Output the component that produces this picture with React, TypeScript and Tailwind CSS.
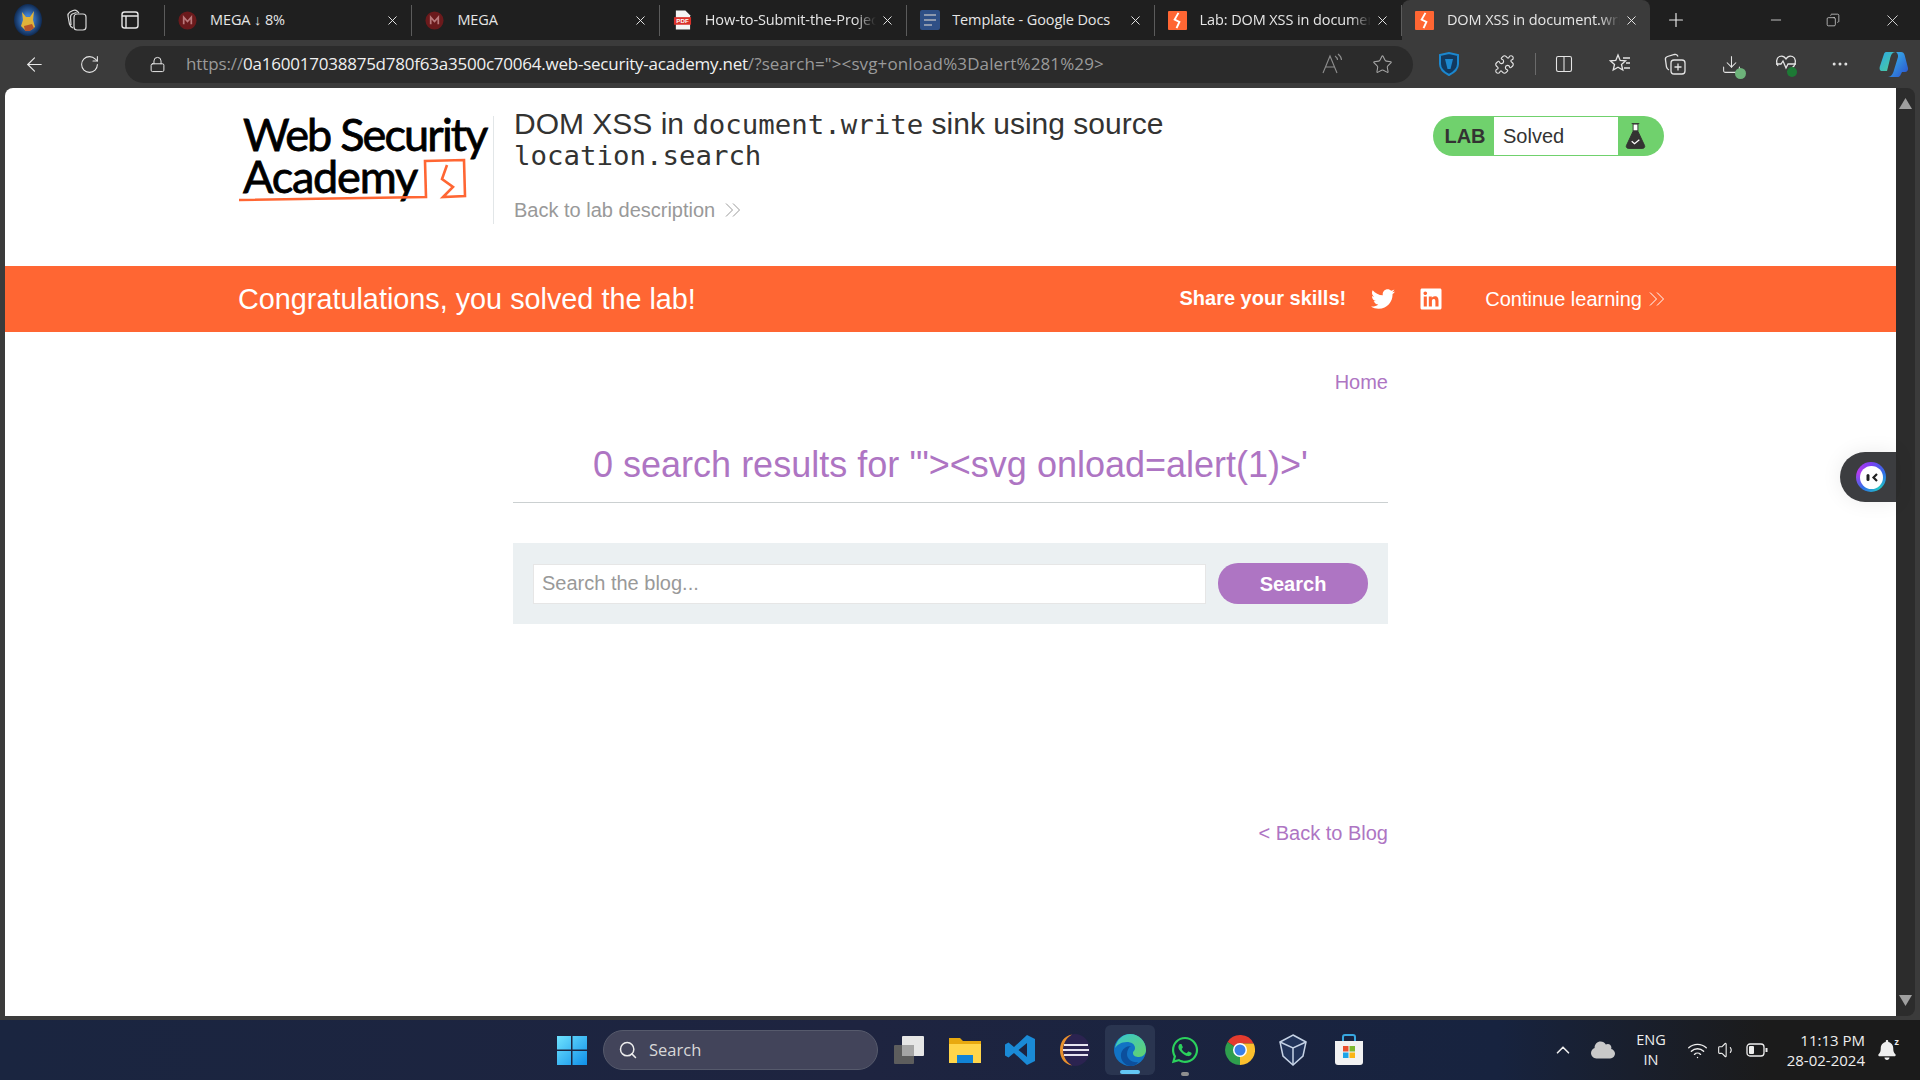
import React from "react";
import { ArrowLeft, RotateCw, Lock, Star, Puzzle, Columns2, Download, Ellipsis, X, Plus, Minus, Search, ChevronUp, Wifi, Volume1, Copy } from "lucide-react";
import { FaTwitter, FaLinkedin, FaWhatsapp, FaCloud, FaBell } from "react-icons/fa";

const tabFont = { fontFamily: '"Open Sans", sans-serif' };

function Bolt({ size = 19 }: { size?: number }) {
  return (
    <svg width={size} height={size} viewBox="0 0 20 20" className="shrink-0">
      <rect width="20" height="20" rx="1" fill="#ff6633" />
      <path d="M11 2 L7 9 L12 11.5 L9 18" fill="none" stroke="#fff" strokeWidth="2" />
    </svg>
  );
}
function Mega() {
  return (
    <svg width="19" height="19" viewBox="0 0 20 20" className="shrink-0">
      <circle cx="10" cy="10" r="9.5" fill="#6b1a1c" />
      <path d="M6 14V6.5l4 4.5 4-4.5V14" fill="none" stroke="#b9787a" strokeWidth="1.8" />
    </svg>
  );
}
function Pdf() {
  return (
    <svg width="19" height="20" viewBox="0 0 20 20" className="shrink-0">
      <path d="M3 0h10l5 5v15H3z" fill="#f4f4f4" />
      <rect x="1" y="7" width="18" height="8" fill="#d9322b" />
      <text x="10" y="13.4" textAnchor="middle" fontSize="6.5" fontWeight="700" fill="#fff" fontFamily="Liberation Sans">PDF</text>
    </svg>
  );
}
function Docs() {
  return (
    <svg width="20" height="20" viewBox="0 0 20 20" className="shrink-0">
      <rect width="20" height="20" rx="2" fill="#2f4f86" />
      <path d="M4 5h12M4 10h12M4 15h8" stroke="#8c97ad" strokeWidth="2.2" />
    </svg>
  );
}

function Tab({ icon, title, active, fade }: { icon: React.ReactNode; title: string; active?: boolean; fade?: boolean }) {
  return (
    <div
      className={
        active
          ? "flex h-10 w-[248px] shrink-0 items-center rounded-t-lg bg-[#3b3b3b] pl-[13px] pr-[11px]"
          : "flex h-[31px] w-[247.4px] shrink-0 items-center border-r border-[#5b5b5b] pl-[13px] pr-[11px]"
      }
    >
      <span className="flex w-[32px] shrink-0 items-center">{icon}</span>
      <span
        className={
          fade
            ? "min-w-0 flex-1 overflow-hidden whitespace-nowrap text-[14.5px] tracking-[-0.1px] text-[#e6e6e6] [mask-image:linear-gradient(to_right,black_88%,transparent)]"
            : "min-w-0 flex-1 overflow-hidden whitespace-nowrap text-[14.5px] tracking-[-0.1px] text-[#e6e6e6]"
        }
      >
        {title}
      </span>
      <X size={15} strokeWidth={1.5} className="ml-1 shrink-0 text-[#eeeeee]" />
    </div>
  );
}

function TabStrip() {
  return (
    <div className="flex h-10 shrink-0 items-center bg-[#1f1f1f]" style={tabFont}>
      <svg width="30" height="32" viewBox="0 0 30 32" className="ml-[13px] shrink-0">
        <defs>
          <radialGradient id="av">
            <stop offset="0.3" stopColor="#3f7fd0" />
            <stop offset="1" stopColor="#0f2a52" />
          </radialGradient>
        </defs>
        <ellipse cx="15" cy="16" rx="14" ry="16" fill="url(#av)" />
        <path d="M9 8l4 5h4l4-6-1 9 2 7-4 3h-6l-4-4 2-6z" fill="#e0b33a" />
        <path d="M11 22l8-2 2 4-4 3h-5z" fill="#b5552a" />
      </svg>
      <svg width="24" height="24" viewBox="0 0 24 24" fill="none" stroke="#d8d8d8" strokeWidth="1.2" className="ml-[22px] shrink-0">
        <rect x="9" y="6" width="12" height="16" rx="3" />
        <path d="M8 20c-2-1-3-2-3.500-4L3 8c-.3-2 .5-3 2-4l3-1.500c1.500-.6 3-.5 4 .5l2 2M6 17L5.500 9c0-2 1-3 3-3.500l3-1" />
      </svg>
      <svg width="20" height="20" viewBox="0 0 20 20" fill="none" stroke="#e6e6e6" strokeWidth="1.4" className="ml-[31px] shrink-0">
        <rect x="2" y="2" width="16" height="16" rx="2.500" />
        <path d="M2 6h16M6 6v12" />
      </svg>
      <div className="ml-[24px] h-[31px] w-px shrink-0 bg-[#5b5b5b]" />
      <Tab icon={<Mega />} title="MEGA ↓ 8%" />
      <Tab icon={<Mega />} title="MEGA" />
      <Tab icon={<Pdf />} title="How-to-Submit-the-Project" fade />
      <Tab icon={<Docs />} title="Template - Google Docs" />
      <Tab icon={<Bolt />} title="Lab: DOM XSS in document.write" fade />
      <Tab icon={<Bolt />} title="DOM XSS in document.write sink" active fade />
      <Plus size={22} strokeWidth={1.3} className="ml-[15px] shrink-0 text-[#e8e8e8]" />
      <Minus size={16} strokeWidth={1.2} className="ml-[81px] shrink-0 text-[#e8e8e8]" />
      <Copy size={14} strokeWidth={1.2} className="ml-[42px] shrink-0 -scale-x-100 text-[#e8e8e8]" />
      <X size={19} strokeWidth={1.1} className="ml-[43px] shrink-0 text-[#e8e8e8]" />
    </div>
  );
}

function Toolbar() {
  return (
    <div className="flex h-12 shrink-0 items-center bg-[#3b3b3b]" style={tabFont}>
      <ArrowLeft size={23} strokeWidth={1.2} className="ml-[23px] shrink-0 text-[#e8e8e8]" />
      <RotateCw size={21} strokeWidth={1.2} className="ml-[33px] shrink-0 text-[#e8e8e8]" />
      <div className="ml-[25px] flex h-[37px] w-[1288px] shrink-0 items-center rounded-full bg-[#2b2b2b] pl-[24px] pr-[20px]">
        <Lock size={17} strokeWidth={1.4} className="shrink-0 text-[#e8e8e8]" />
        <div className="ml-[20px] min-w-0 flex-1 whitespace-nowrap text-[17px] tracking-[0.12px] text-[#9a9a9a]">
          <span className="tracking-[-0.12px]">https://</span><span className="tracking-[-0.23px] text-[#f0f0f0]">0a160017038875d780f63a3500c70064.web-security-academy.net</span>/?search="&gt;&lt;svg+onload%3Dalert%281%29&gt;
        </div>
        <svg width="22" height="22" viewBox="0 0 22 22" fill="none" stroke="#8e8e8e" strokeWidth="1.100" className="mr-[1px] shrink-0">
          <path d="M1 20 L8 3 L15 20M3.500 14h9" />
          <path d="M13 3c1.500 1 2.500 2.500 2.500 4M16 1c2 1.500 3.500 3.500 3.500 6" />
        </svg>
        <Star size={21} strokeWidth={1.2} className="ml-[27px] shrink-0 text-[#a5a5a5]" />
      </div>
      <svg width="20" height="24" viewBox="0 0 20 24" className="ml-[26px] shrink-0">
        <path d="M1 3 L10 1 L19 3 V12 C19 18 14 21 10 23 C6 21 1 18 1 12 Z" fill="#12395f" stroke="#1b87cf" strokeWidth="2" />
        <path d="M6 7h8l-2.500 10h-3z" fill="#1b87cf" />
      </svg>
      <Puzzle size={21} strokeWidth={1.3} className="ml-[35px] shrink-0 text-[#e4e4e4]" />
      <div className="ml-[20px] h-[22px] w-px shrink-0 bg-[#6a6a6a]" />
      <Columns2 size={20} strokeWidth={1.3} className="ml-[18px] shrink-0 text-[#e4e4e4]" />
      <svg width="22" height="22" viewBox="0 0 22 22" fill="none" stroke="#e4e4e4" strokeWidth="1.300" className="ml-[35px] shrink-0">
        <path d="M9 2l2.200 5.500 5.300.4-4 3.600 1.300 5.500L9 14.200 4.200 17l1.300-5.500-4-3.600 5.300-.4z" />
        <path d="M14 5h7M17 10h4M15 15h6" />
      </svg>
      <svg width="22" height="22" viewBox="0 0 22 22" fill="none" stroke="#e4e4e4" strokeWidth="1.300" className="ml-[33px] shrink-0">
        <path d="M5 17c-1.500-.5-2-1.500-2.500-3L1.500 7C1 5 2 4 3.500 3.500l7-2c2-.5 3 .5 3.500 2" />
        <rect x="7" y="7" width="14" height="14" rx="3" />
        <path d="M14 10.500v7M10.500 14h7" />
      </svg>
      <div className="relative ml-[35px] shrink-0">
        <Download size={21} strokeWidth={1.2} className="text-[#e4e4e4]" />
        <span className="absolute -bottom-1 -right-1 h-[11px] w-[11px] rounded-full bg-[#6db37a]" />
      </div>
      <div className="relative ml-[33px] shrink-0">
        <svg width="22" height="22" viewBox="0 0 22 22" fill="none" stroke="#e4e4e4" strokeWidth="1.300">
          <path d="M3 13C1 10 1 5 4.500 3.500 7 2.500 9.500 3.500 11 6c1.500-2.500 4-3.500 6.500-2.500C21 5 21 10 19 13l-6 6" />
          <path d="M1 11h5l2-3 3 7 2-4h8" />
        </svg>
        <span className="absolute -bottom-0.5 right-0 h-[10px] w-[10px] rounded-full bg-[#1d7a35]" />
      </div>
      <Ellipsis size={20} strokeWidth={1.6} className="ml-[33px] shrink-0 text-[#e4e4e4]" />
      <svg width="30" height="30" viewBox="0 0 30 30" className="ml-[29px] shrink-0">
        <defs>
          <linearGradient id="cp1" x1="0" y1="0" x2="1" y2="1">
            <stop offset="0" stopColor="#2aa8e8" />
            <stop offset="1" stopColor="#53d18f" />
          </linearGradient>
          <linearGradient id="cp2" x1="0" y1="0" x2="1" y2="1">
            <stop offset="0" stopColor="#39c2ea" />
            <stop offset="1" stopColor="#2a4ecf" />
          </linearGradient>
        </defs>
        <path d="M7 3h10c-4 0-5 3-6 7l-3 12H3c-2 0-3-2-2-5L5 5c.3-1 1-2 2-2z" fill="url(#cp1)" />
        <path d="M17 3h5c2 0 3 1 3.600 3L29 19c.5 2-1 4-3 4h-3l-2 4c-1 1-2 1-3 1H9c3 0 5-3 6-7l4-13c.3-2-.5-4-2-5z" fill="url(#cp2)" />
      </svg>
    </div>
  );
}

function Logo() {
  return (
    <div className="relative h-[108px] w-[255px] shrink-0 -mt-[3px] pl-[5px] text-black" style={{ fontFamily: 'Lato, sans-serif' }}>
      <div className="whitespace-nowrap text-[45px] font-normal leading-[42px] tracking-[-1.85px] [-webkit-text-stroke:0.8px_black]">Web Security</div>
      <div className="whitespace-nowrap text-[45px] font-normal leading-[42px] tracking-[-1.2px] [-webkit-text-stroke:0.8px_black]">Academy</div>
      <svg width="250" height="60" viewBox="0 0 250 60" className="absolute left-0 top-[41px]" fill="none" stroke="#ff6633">
        <path d="M1 46 L188 43 L187 7 L226 6 L227 42 L205 43 L215 33 L204 25 L209 11" strokeWidth="2.600" />
      </svg>
    </div>
  );
}

function Chevrons({ className }: { className: string }) {
  return (
    <svg width="16" height="16" viewBox="0 0 16 16" fill="none" stroke="currentColor" strokeWidth="1" className={className}>
      <path d="M1 1.500 L7.500 8 L1 14.500M8 1.500 L14.500 8 L8 14.500" />
    </svg>
  );
}

function Header() {
  return (
    <div className="flex h-[178px] shrink-0 bg-white pl-[233px] pt-[28px] pr-[232px]" style={{ fontFamily: '"Liberation Sans", sans-serif' }}>
      <Logo />
      <div className="h-[108px] w-px shrink-0 bg-[#e2e6e8]" />
      <div className="ml-[20px] w-[680px] shrink-0 text-[#333332]">
        <div className="-mt-[7px] text-[30px] leading-[30px]">
          DOM XSS in <span className="font-['DejaVu_Sans_Mono',monospace] text-[27.4px]">document.write</span> sink using source <span className="font-['DejaVu_Sans_Mono',monospace] text-[27.4px]">location.search</span>
        </div>
        <div className="mt-[25px] flex items-center text-[20px] leading-[28px] text-[#999999]">
          Back to lab description
          <Chevrons className="ml-[10px] text-[#999999]" />
        </div>
      </div>
      <div className="ml-auto">
        <LabPill />
      </div>
    </div>
  );
}

function LabPill() {
  return (
    <div className="flex h-10 w-[231px] overflow-hidden rounded-[20px] bg-[#70d16d] p-px">
      <div className="flex w-[60px] items-center justify-center pl-[2px] text-[20px] font-bold text-[#333332]">LAB</div>
      <div className="flex w-[124px] items-center bg-white pl-[9px] text-[20px] text-[#333332]">Solved</div>
      <div className="flex flex-1 items-center pl-[7px]">
        <svg width="21" height="28" viewBox="0 0 22 28">
          <path d="M7 1h8M8.500 1v8L1.500 24c-.6 1.500.4 3 2 3h15c1.600 0 2.600-1.500 2-3L13.500 9V1" fill="#333332" stroke="#333332" strokeWidth="1" />
          <rect x="9" y="2" width="4" height="6" fill="#fff" />
          <path d="M7 19.500l3 2.500 5-4" fill="none" stroke="#fff" strokeWidth="1.300" />
        </svg>
      </div>
    </div>
  );
}

function Banner() {
  return (
    <div className="flex h-[66px] shrink-0 items-center bg-[#ff6633] pl-[233px] pr-[232px] text-white" style={{ fontFamily: '"Liberation Sans", sans-serif' }}>
      <div className="mt-[1px] text-[28.8px]">Congratulations, you solved the lab!</div>
      <div className="ml-auto -mt-[3px] text-[20px] font-bold">Share your skills!</div>
      <FaTwitter size={24} className="ml-[25px]" />
      <FaLinkedin size={24} className="ml-[24px]" />
      <div className="ml-[42px] -mt-[1px] text-[20px]">Continue learning</div>
      <Chevrons className="ml-[7px] -mr-[1px]" />
    </div>
  );
}

function Main() {
  return (
    <div className="flex flex-1 flex-col bg-white px-[508px]" style={{ fontFamily: '"Liberation Sans", sans-serif' }}>
      <div className="mt-[36px] text-right text-[20px] leading-[28px] text-[#ae75c3]">Home</div>
      <div className="mt-[46px] border-b border-[#cbd0d1] pb-[14px] text-center text-[36px] leading-[46px] text-[#ae75c3]">
        0 search results for '"&gt;&lt;svg onload=alert(1)&gt;'
      </div>
      <div className="mt-[40px] flex h-[81px] items-center bg-[#ebf0f2] px-[20px]">
        <div className="flex h-10 flex-1 items-center border border-[#e6e6e6] bg-white pb-[1px] pl-[8px] text-[20px] text-[#999999]">Search the blog...</div>
        <div className="ml-[12px] flex h-[41px] w-[150px] items-center justify-center rounded-[20px] bg-[#ae75c3] text-[20px] font-bold text-white">Search</div>
      </div>
      <div className="mt-[195px] text-right text-[20px] leading-[28px] text-[#ae75c3]">&lt; Back to Blog</div>
    </div>
  );
}

function Windows() {
  return (
    <svg width="30" height="30" viewBox="0 0 30 30" className="shrink-0">
      <defs>
        <linearGradient id="w" x1="0" y1="0" x2="1" y2="1">
          <stop offset="0" stopColor="#6fe3ff" />
          <stop offset="1" stopColor="#0f8fe8" />
        </linearGradient>
      </defs>
      <path d="M0 1h14v13.500H0zM15.500 1H30v13.500H15.500zM0 16h14v14H0zM15.500 16H30v14H15.500z" fill="url(#w)" />
    </svg>
  );
}

function TaskIcons() {
  return (
    <div className="flex items-center">
      <svg width="30" height="30" viewBox="0 0 30 30" className="ml-[16px]">
        <rect x="0" y="10" width="20" height="19" rx="1" fill="#5d5d5d" />
        <rect x="8" y="1" width="22" height="20" rx="1" fill="#e6e6e6" />
        <rect x="8" y="10" width="12" height="11" fill="#a5a5a5" />
      </svg>
      <svg width="32" height="28" viewBox="0 0 32 28" className="ml-[25px]">
        <path d="M0 2h11l3 3h18v22H0z" fill="#e8a90f" />
        <path d="M0 8h32v19H0z" fill="#ffd54a" />
        <rect x="8" y="19" width="16" height="8" fill="#1183d6" />
      </svg>
      <svg width="30" height="30" viewBox="0 0 30 30" className="ml-[24px]">
        <path d="M22 0 L30 4 V26 L22 30 L9 18 L3.500 22.500 L0 20.500 V9.500 L3.500 7.500 L9 12 Z M22 8 L13.500 15 L22 22 Z" fill="#1a8ad6" fillRule="evenodd" />
      </svg>
      <svg width="30" height="32" viewBox="0 0 30 32" className="ml-[25px]">
        <ellipse cx="15" cy="16" rx="15" ry="16" fill="#2b2350" />
        <path d="M12 0.500 C4 2 0 8 0 16 C0 24 4 30 12 31.500 C6 28 3 22 3 16 C3 10 6 4 12 .5z" fill="#e8912c" />
        <path d="M4 11h24M3 16h26M4 21h24" stroke="#e7e4ef" strokeWidth="2.200" />
      </svg>
      <div className="relative ml-[15px] flex h-[50px] w-[50px] items-center justify-center rounded-md bg-[#2a3550]">
        <svg width="32" height="32" viewBox="0 0 32 32">
          <defs>
            <linearGradient id="e" x1="0" y1="0" x2="1" y2="1">
              <stop offset="0" stopColor="#37c6d0" />
              <stop offset="1" stopColor="#63d26b" />
            </linearGradient>
          </defs>
          <circle cx="16" cy="16" r="16" fill="#1273c4" />
          <path d="M1 14C3 5 9 0 16 0c9 0 16 7 16 16 0 4-3 7-7 7-3 0-6-1-6-4 0-2 2-2 2-5 0-4-4-6-8-6-6 0-10 3-12 6z" fill="url(#e)" />
          <path d="M17 32c-6 0-11-6-10-12 1-5 5-8 10-8-2 1-4 4-4 8 0 5 5 9 11 8-2 3-4 4-7 4z" fill="#0c4f9c" />
        </svg>
        <span className="absolute bottom-[1px] left-1/2 h-[4px] w-[20px] -translate-x-1/2 rounded-full bg-[#63c8f5]" />
      </div>
      <div className="relative ml-[15px] h-[30px]">
        <FaWhatsapp size={30} color="#2bd15c" />
        <span className="absolute -bottom-[11px] left-1/2 h-[4px] w-[8px] -translate-x-1/2 rounded-full bg-[#8f8f8f]" />
      </div>
      <svg width="30" height="30" viewBox="0 0 30 30" className="ml-[25px]">
        <path d="M15 15 L2.500 7 A15 15 0 0 1 28.600 8.500 L15 8.500z" fill="#e33b2e" />
        <path d="M15 15 L15 8.500 L28.600 8.500 A15 15 0 0 1 15 30z" fill="#fbc02d" />
        <path d="M15 15 L15 30 A15 15 0 0 1 2.500 7z" fill="#2e9e4d" />
        <circle cx="15" cy="15" r="7" fill="#fff" />
        <circle cx="15" cy="15" r="5.500" fill="#3a7fe6" />
      </svg>
      <svg width="28" height="32" viewBox="0 0 28 32" className="ml-[24px]" fill="none" stroke="#c6d3e6" strokeWidth="1.500">
        <path d="M14 1 L27 8 L24 22 L14 31 L4 22 L1 8 Z" fill="#22345a" />
        <path d="M1 8 L14 14 L27 8 M14 14 L14 31" />
      </svg>
      <svg width="30" height="32" viewBox="0 0 30 32" className="ml-[27px]">
        <path d="M9 7V3c0-1 1-2 2-2h8c1 0 2 1 2 2v4" fill="none" stroke="#37a7e0" strokeWidth="2" />
        <path d="M1 7h28v21c0 2-1 3-3 3H4c-2 0-3-1-3-3z" fill="#f2f2f2" />
        <rect x="9" y="12" width="5.500" height="5.500" fill="#e94f2e" />
        <rect x="15.500" y="12" width="5.500" height="5.500" fill="#7cb82f" />
        <rect x="9" y="18.500" width="5.500" height="5.500" fill="#1ea3e8" />
        <rect x="15.500" y="18.500" width="5.500" height="5.500" fill="#fbb515" />
      </svg>
    </div>
  );
}

function Taskbar() {
  return (
    <div className="flex h-[60px] shrink-0 items-center bg-[linear-gradient(to_right,#1a2540,#1e2440_45%,#17233f_78%,#1b1b1b_92%)] pl-[557px]" style={tabFont}>
      <Windows />
      <div className="ml-[16px] flex h-10 w-[275px] shrink-0 items-center rounded-full border border-[#565a6c] bg-[#42445a] pl-[14px] text-[16.5px] text-[#d8d8d8]">
        <Search size={20} strokeWidth={1.8} className="text-[#ededed]" />
        <span className="ml-[11px]">Search</span>
      </div>
      <TaskIcons />
      <div className="ml-auto flex items-center text-[#eeeeee]">
        <ChevronUp size={22} strokeWidth={1.8} />
        <FaCloud size={24} className="ml-[17px] text-[#c9c9c9]" />
        <div className="ml-[16px] w-[40px] text-center text-[14.5px] leading-[20px]">ENG<br />IN</div>
        <Wifi size={21} strokeWidth={1.6} className="ml-[16px]" />
        <Volume1 size={20} strokeWidth={1.3} className="ml-[9px]" />
        <svg width="22" height="14" viewBox="0 0 22 14" fill="none" stroke="#eeeeee" strokeWidth="1.300" className="ml-[9px]">
          <rect x="1" y="1" width="17" height="12" rx="3" />
          <rect x="3" y="3" width="5" height="8" rx="1" fill="#eeeeee" stroke="none" />
          <path d="M20.500 5v4" strokeWidth="2" />
        </svg>
        <div className="ml-[13px] w-[84px] whitespace-nowrap text-right text-[15px] leading-[20px]">11:13 PM<br />28-02-2024</div>
        <div className="relative ml-[12px] mr-[23px]">
          <FaBell size={20} />
          <span className="absolute -right-[2px] -top-[3px] text-[9px] font-bold leading-none text-[#eeeeee]">z</span>
        </div>
      </div>
    </div>
  );
}

function ScrollBar() {
  return (
    <div className="flex w-[19px] shrink-0 flex-col items-center justify-between rounded-r-lg bg-[#2c2c2c] py-[10px]">
      <svg width="13" height="11" viewBox="0 0 13 11"><path d="M6.500 0 L13 11 H0z" fill="#9f9f9f" /></svg>
      <svg width="13" height="11" viewBox="0 0 13 11"><path d="M6.500 11 L13 0 H0z" fill="#9f9f9f" /></svg>
    </div>
  );
}

export default function App() {
  return (
    <div className="relative flex h-[1080px] w-[1920px] flex-col overflow-hidden bg-[#3b3b3b]">
      <TabStrip />
      <Toolbar />
      <div className="flex h-[928px] shrink-0 pl-[5px] pr-[5px]">
        <div className="flex w-[1891px] shrink-0 flex-col overflow-hidden rounded-tl-lg">
          <Header />
          <Banner />
          <Main />
        </div>
        <ScrollBar />
      </div>
      <div className="h-[4px] shrink-0 bg-[#3b3b3b]" />
      <Taskbar />
      <div className="absolute left-[1840px] top-[452px] flex h-[50px] w-[56px] items-center rounded-l-[25px] bg-[#3c3d40] pl-[16px] shadow-[0_0_20px_rgba(0,0,0,0.08)]">
        <div className="flex h-[30px] w-[30px] items-center justify-center rounded-full bg-[conic-gradient(#7b3ff2,#2f6fe8,#21c4c4,#2f6fe8,#b43cf0,#7b3ff2)]">
          <svg width="23" height="23" viewBox="0 0 23 23">
            <circle cx="11.500" cy="11.500" r="11.500" fill="#fff" />
            <rect x="6.500" y="8" width="3" height="7" rx="1.500" fill="#222" />
            <path d="M17 8 L13.500 11.500 L17 15" fill="none" stroke="#222" strokeWidth="2.200" />
          </svg>
        </div>
      </div>
    </div>
  );
}
